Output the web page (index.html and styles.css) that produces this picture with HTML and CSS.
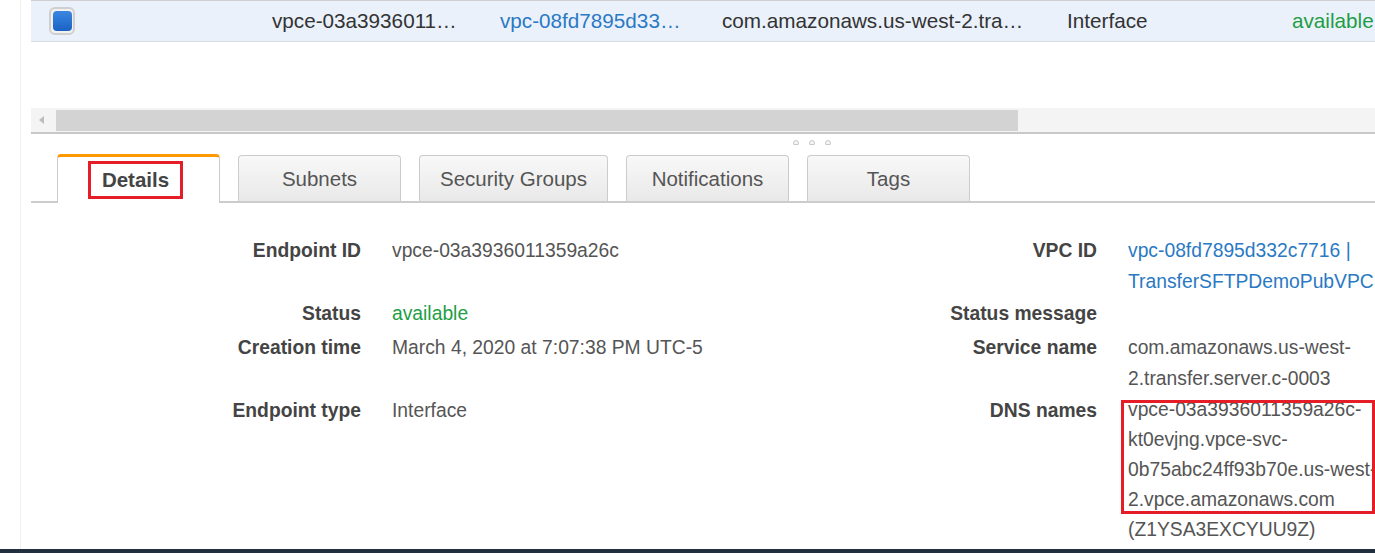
FILE: index.html
```html
<!DOCTYPE html>
<html lang="en">
<head>
<meta charset="utf-8">
<title>Endpoint details</title>
<link rel="stylesheet" href="styles.css">
</head>
<body>
<div class="page">
  <div class="rail"></div>
  <div class="main">
    <div class="table-row">
      <div class="cell cell-check"><span class="checkbox"><span class="checkbox-fill"></span></span></div>
      <div class="cell">vpce-03a3936011…</div>
      <div class="cell link">vpc-08fd7895d33…</div>
      <div class="cell">com.amazonaws.us-west-2.tra…</div>
      <div class="cell">Interface</div>
      <div class="cell ok">available</div>
    </div>
    <div class="spacer"></div>
    <div class="hscroll">
      <div class="hscroll-arrow"><span class="tri"></span></div>
      <div class="hscroll-thumb"></div>
    </div>
    <div class="resize">
      <span class="dot"></span><span class="dot"></span><span class="dot"></span>
    </div>
    <div class="tabs">
      <div class="tab active"><span class="highlight">Details</span></div>
      <div class="tab">Subnets</div>
      <div class="tab wide">Security Groups</div>
      <div class="tab">Notifications</div>
      <div class="tab">Tags</div>
    </div>
    <div class="details">
      <div class="label">Endpoint ID</div>
      <div class="value">vpce-03a3936011359a26c</div>
      <div class="label">VPC ID</div>
      <div class="value link">vpc-08fd7895d332c7716 |<br>TransferSFTPDemoPubVPC</div>

      <div class="label">Status</div>
      <div class="value ok">available</div>
      <div class="label">Status message</div>
      <div class="value"></div>

      <div class="label spaced">Creation time</div>
      <div class="value spaced">March 4, 2020 at 7:07:38 PM UTC-5</div>
      <div class="label spaced">Service name</div>
      <div class="value spaced">com.amazonaws.us-west-<br>2.transfer.server.c-0003</div>

      <div class="label">Endpoint type</div>
      <div class="value">Interface</div>
      <div class="label">DNS names</div>
      <div class="value dns">vpce-03a3936011359a26c-<br>kt0evjng.vpce-svc-<br>0b75abc24ff93b70e.us-west-<br>2.vpce.amazonaws.com<br>(Z1YSA3EXCYUU9Z)<span class="annot"></span></div>
    </div>
  </div>
</div>
<div class="footer"></div>
</body>
</html>
```

FILE: styles.css
```css
html, body {
  margin: 0;
  padding: 0;
  height: 553px;
  overflow: hidden;
  background: #fff;
}
body {
  font-family: "Liberation Sans", Arial, sans-serif;
  color: #444;
  display: flex;
  flex-direction: column;
}
.page {
  flex: 1;
  display: flex;
  min-height: 0;
  overflow: hidden;
}
.rail {
  width: 20px;
  flex: none;
  border-right: 1px solid #efefef;
}
.main {
  flex: 1;
  margin-left: 10px;
  min-width: 0;
}
.table-row {
  height: 40px;
  border-top: 1px solid #cfcfcf;
  border-bottom: 1px solid #d8dde5;
  background: #eaf1fb;
  display: grid;
  grid-template-columns: 241px 228px 222px 345px 225px 200px;
  align-items: center;
  font-size: 20.7px;
  color: #333;
  white-space: nowrap;
}
.cell-check {
  padding-left: 18px;
  display: flex;
  align-items: center;
}
.checkbox {
  width: 22px;
  height: 24px;
  border: 2px solid #cfcfcf;
  border-radius: 6px;
  background: #f1f1f1;
  display: flex;
  align-items: center;
  justify-content: center;
}
.checkbox-fill {
  width: 19px;
  height: 20px;
  border-radius: 4px;
  background: linear-gradient(#3b87e0, #1a62c4);
}
.link { color: #2a79c4; }
.ok { color: #1e9e44; }
.spacer { height: 66px; }
.hscroll {
  height: 24px;
  background: #f4f4f4;
  border-bottom: 2px solid #c8c8c8;
  display: flex;
  align-items: center;
}
.hscroll-arrow {
  width: 25px;
  height: 100%;
  display: flex;
  align-items: center;
  justify-content: center;
}
.tri {
  width: 0;
  height: 0;
  border-top: 4px solid transparent;
  border-bottom: 4px solid transparent;
  border-right: 5px solid #bcbcbc;
  margin-left: -4px;
}
.hscroll-thumb {
  width: 962px;
  height: 21px;
  background: #d3d3d3;
}
.resize {
  height: 20px;
  display: flex;
  gap: 10px;
  padding-left: 762px;
  padding-top: 6px;
  box-sizing: border-box;
  align-items: flex-start;
}
.dot {
  width: 4px;
  height: 3px;
  border: 1px solid #c9c9c9;
  border-radius: 3px 3px 1px 1px;
  background: #f4f4f4;
}
.tabs {
  display: flex;
  align-items: flex-end;
  gap: 18px;
  padding-left: 26px;
  border-bottom: 2px solid #cccccc;
  height: 47px;
}
.tab {
  width: 161px;
  height: 45px;
  border: 1px solid #cccccc;
  border-bottom: none;
  border-radius: 4px 4px 0 0;
  background: linear-gradient(#f8f8f8, #e9e9e9);
  display: flex;
  align-items: center;
  justify-content: center;
  font-size: 20.5px;
  color: #555;
}
.tab.wide { width: 187px; }
.tab.active {
  height: 46px;
  background: #fff;
  border-top: 3px solid #ff9900;
  margin-bottom: -2px;
  font-weight: bold;
  color: #444;
}
.highlight {
  display: inline-block;
  border: 3px solid #e41d27;
  padding: 4px 11px 4px;
  line-height: 24px;
  margin-top: 0;
  margin-left: -6px;
}
.details {
  display: grid;
  grid-template-columns: 330px 370px 304px 280px;
  column-gap: 31px;
  row-gap: 1px;
  padding-top: 32px;
  font-size: 19.3px;
  line-height: 31px;
  white-space: nowrap;
}
.spaced { margin-top: 2px; }
.label {
  text-align: right;
  font-weight: bold;
  color: #444;
}
.value { color: #555; }
.value.link { color: #2a79c4; }
.value.ok { color: #1e9e44; }
.dns {
  position: relative;
  line-height: 30px;
}
.annot {
  position: absolute;
  left: -7px;
  top: 5px;
  width: 248px;
  height: 108px;
  border: 3px solid #e41d27;
}
.footer {
  height: 4px;
  flex: none;
  background: #232f3e;
}
```
